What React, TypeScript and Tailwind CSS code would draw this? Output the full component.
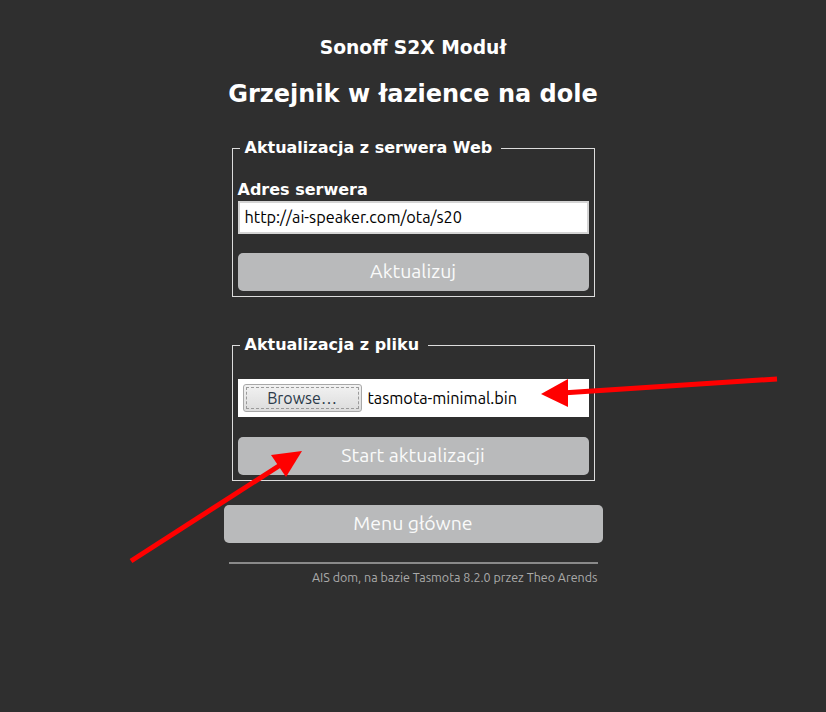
import React from "react";

const ubuntu = "font-['Ubuntu','Open_Sans','Noto_Sans',sans-serif]";

export default function App() {
  return (
    <div className="relative w-full min-h-[712px] bg-[#2f2f2f] font-['DejaVu_Sans',sans-serif]">
      <div className="mx-auto w-[379px] pt-[36px] flex flex-col">
        <h3 className="text-center text-[18.72px] leading-[24px] font-bold text-white">
          Sonoff S2X Moduł
        </h3>
        <h2 className="mt-[19px] text-center text-[24px] leading-[30px] font-bold text-white">
          Grzejnik w łazience na dole
        </h2>

        <fieldset className="mt-[29px] mx-[8px] border border-[#dcdcdc] px-[5px] pb-[5px]">
          <legend className="ml-[2px] px-[5px] pr-[9px] text-[16px] leading-[20px] font-bold text-white">
            Aktualizacja z serwera Web
          </legend>
          <div className="mt-[22px] text-[16px] leading-[20px] font-bold text-white">
            Adres serwera
          </div>
          <div
            className={`mt-[1px] h-[33px] bg-white border-2 border-[#d4d4d4] flex items-center px-[5px] text-[16.3px] text-black ${ubuntu}`}
          >
            http://ai-speaker.com/ota/s20
          </div>
          <button
            className={`mt-[19px] h-[38px] w-full rounded-[5px] bg-[#b9babb] text-[#fafafa] text-[19.5px] ${ubuntu}`}
          >
            Aktualizuj
          </button>
        </fieldset>

        <fieldset className="mt-[38px] mx-[8px] border border-[#dcdcdc] px-[5px] pb-[5px]">
          <legend className="ml-[2px] px-[5px] pr-[9px] text-[16px] leading-[20px] font-bold text-white">
            Aktualizacja z pliku
          </legend>
          <div className={`mt-[24px] h-[38px] bg-white flex items-center px-[5px] gap-[6px] ${ubuntu}`}>
            <div className="h-[28px] w-[119px] rounded-[3px] border border-[#a8a8a8] bg-gradient-to-b from-[#f2f2f2] to-[#dcdcdc] p-[2px]">
              <div className="h-full w-full border border-dashed border-[#9a9a9a] flex items-center justify-center text-[16px] text-[#2b3a4a]">
                Browse…
              </div>
            </div>
            <span className="text-[16.3px] text-black">tasmota-minimal.bin</span>
          </div>
          <button
            className={`mt-[20px] h-[38px] w-full rounded-[5px] bg-[#b9babb] text-[#fafafa] text-[19.5px] ${ubuntu}`}
          >
            Start aktualizacji
          </button>
        </fieldset>

        <button
          className={`mt-[24px] h-[38px] w-full rounded-[5px] bg-[#b9babb] text-[#fafafa] text-[19.5px] ${ubuntu}`}
        >
          Menu główne
        </button>

        <div className="mt-[19px] mx-[5px] h-[2px] bg-[#8a8a8a]" />
        <div className={`mx-[5px] mt-[6px] text-right text-[12.5px] leading-[15px] text-[#aaaaaa] ${ubuntu}`}>
          AIS dom, na bazie Tasmota 8.2.0 przez Theo Arends
        </div>
      </div>

      <svg
        className="absolute inset-0 pointer-events-none"
        width="826"
        height="712"
        viewBox="0 0 826 712"
      >
        <line x1="777" y1="379" x2="562" y2="393" stroke="#ff0000" strokeWidth="5" />
        <polygon points="541,394 568,379 568,407" fill="#ff0000" />
        <line x1="131" y1="561" x2="285" y2="462" stroke="#ff0000" strokeWidth="5" />
        <polygon points="302,451 271,455 286,477" fill="#ff0000" />
      </svg>
    </div>
  );
}
